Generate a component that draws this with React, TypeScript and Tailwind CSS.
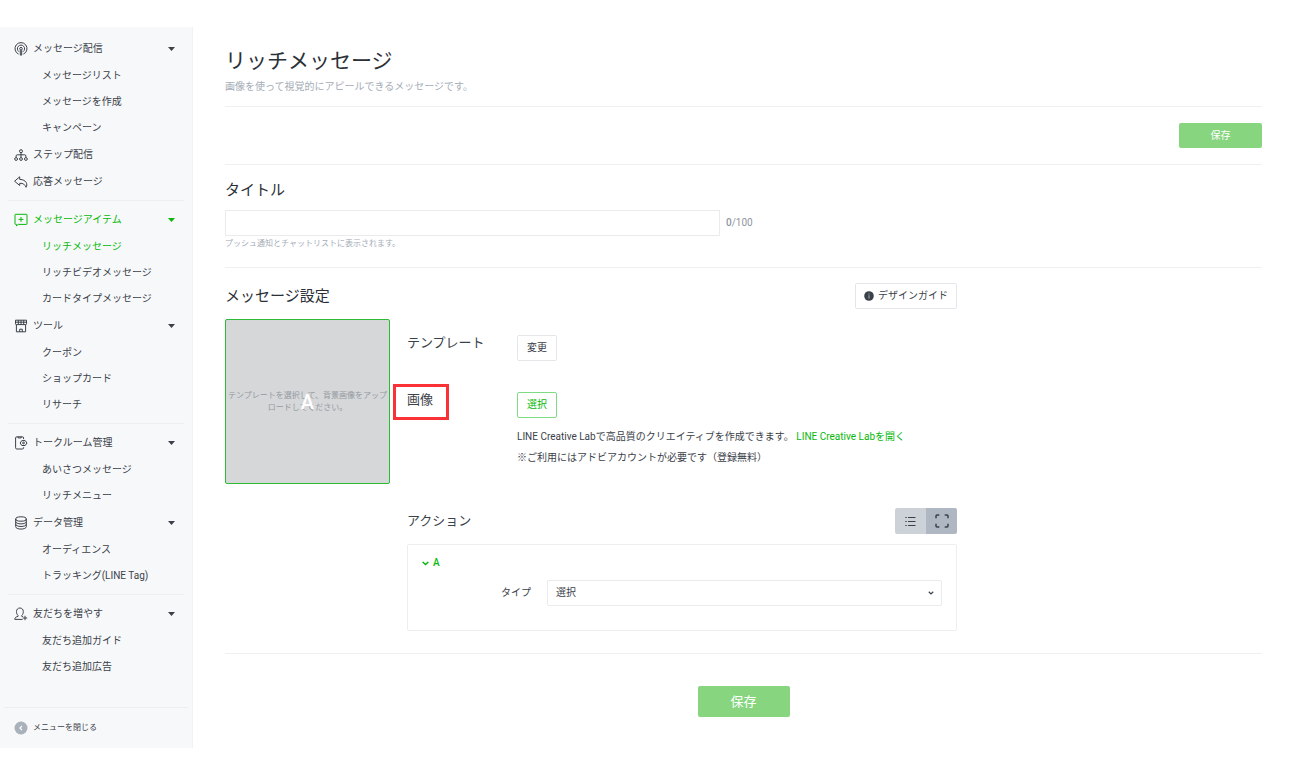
import React, { useState } from "react";

type IconName = "broadcast" | "step" | "reply" | "item" | "shop" | "room" | "data" | "friend";

interface NavItem {
  label: string;
  icon: IconName;
  children?: string[];
}

const NAV_GROUPS: NavItem[][] = [
  [
    { label: "メッセージ配信", icon: "broadcast", children: ["メッセージリスト", "メッセージを作成", "キャンペーン"] },
    { label: "ステップ配信", icon: "step" },
    { label: "応答メッセージ", icon: "reply" },
  ],
  [
    { label: "メッセージアイテム", icon: "item", children: ["リッチメッセージ", "リッチビデオメッセージ", "カードタイプメッセージ"] },
    { label: "ツール", icon: "shop", children: ["クーポン", "ショップカード", "リサーチ"] },
  ],
  [
    { label: "トークルーム管理", icon: "room", children: ["あいさつメッセージ", "リッチメニュー"] },
    { label: "データ管理", icon: "data", children: ["オーディエンス", "トラッキング(LINE Tag)"] },
  ],
  [{ label: "友だちを増やす", icon: "friend", children: ["友だち追加ガイド", "友だち追加広告"] }],
];

const ACTIVE_ITEM = "リッチメッセージ";

const ICONS: Record<IconName, React.ReactNode> = {
  broadcast: (
    <>
      <path d="M4.6 12.1a6 6 0 1 1 4.8 0" />
      <path d="M5 9.7a3.6 3.6 0 1 1 4 0" />
      <circle cx="7" cy="6.7" r="1.3" />
      <path d="M6.3 8.2v4.9h1.4V8.2" />
    </>
  ),
  step: (
    <>
      <circle cx="7" cy="3.2" r="1.5" />
      <path d="M7 4.7v4.9M2.1 9.6V8q0-1.2 1.2-1.2h7.4q1.200 0 1.200 1.200v1.600" />
      <circle cx="2.1" cy="11" r="1.4" />
      <circle cx="7" cy="11" r="1.4" />
      <circle cx="11.9" cy="11" r="1.4" />
    </>
  ),
  reply: <path d="M5.700 1.800.6 6.200l5.100 4.300V8.300c3.500-.3 5.100 1.200 6.400 4 1.700-2.600.6-7.700-6.400-7.900z" />,
  item: (
    <>
      <path d="M1.600 1.300h10.800q.6 0 .6.600v8.900q0 .6-.6.600H4.200L2.500 12.900v-1.500h-.9Q1 11.400 1 10.800V1.900q0-.6.600-.6z" />
      <path d="M7 4v4.800M4.600 6.400h4.800" />
    </>
  ),
  shop: (
    <>
      <path d="M1.500 1.200h11v3.600q0 .8-.9.800H2.400q-.9 0-.9-.8zM1.500 3.200h11M4.300 1.200v4.400M7 1.200v4.400M9.700 1.200v4.400" />
      <path d="M2.400 5.600v7.200h9.200V5.600M5.700 12.800V10.200h2.600v2.600" />
    </>
  ),
  room: (
    <>
      <path d="M9.600 3.100V2q0-1.200-1.200-1.200H2.800Q1.600.8 1.600 2v9.800q0 1.200 1.200 1.200h5.600q1.200 0 1.200-1.200v-.7M4 .9v1h3.200v-1" />
      <path d="M7.800 4.600h3.400L13 7l-1.800 2.500H7.800L6.100 7z" />
      <circle cx="9.500" cy="7" r=".9" />
    </>
  ),
  data: (
    <>
      <ellipse cx="7" cy="3" rx="5.300" ry="2.200" />
      <path d="M1.700 3v7.800C1.700 12 4 13.100 7 13.100s5.300-1.100 5.300-2.300V3M1.700 5.700c0 1.200 2.300 2.200 5.300 2.200s5.300-1 5.300-2.200M1.700 8.300c0 1.200 2.300 2.200 5.300 2.200s5.300-1 5.300-2.200" />
    </>
  ),
  friend: (
    <>
      <path d="M8.600 12.400H.8c0-2 1.300-2.500 3.200-3v-1C2.900 7.400 2.500 6.300 2.500 4.600 2.500 2.500 3.800 1 5.900 1s3.400 1.500 3.400 3.600c0 1.700-.4 2.800-1.500 3.800v1l1.300.4" />
      <path d="M11 8.800v4.400M8.800 11h4.400" />
    </>
  ),
};

function NavIcon({ name }: { name: IconName }) {
  return (
    <svg viewBox="0 0 14 14" fill="none" stroke="currentColor" strokeWidth="1" strokeLinejoin="round" className="size-3.5 shrink-0" aria-hidden="true">
      {ICONS[name]}
    </svg>
  );
}

function NavSection({ item }: { item: NavItem }) {
  const [open, setOpen] = useState(true);
  const active = item.children?.includes(ACTIVE_ITEM);

  if (!item.children) {
    return (
      <a href="#" className="flex h-[27px] items-center gap-[5px] pl-3.5">
        <NavIcon name={item.icon} />
        {item.label}
      </a>
    );
  }

  return (
    <div>
      <button
        onClick={() => setOpen(!open)}
        aria-expanded={open}
        className={`flex h-7 w-full items-center gap-[5px] pl-3.5 pr-[17px] ${active ? "text-[#06b80b]" : ""}`}
      >
        <NavIcon name={item.icon} />
        <span className="flex-1 text-left">{item.label}</span>
        <svg viewBox="0 0 7 4" className="h-1 w-[7px]" fill="currentColor" aria-hidden="true">
          <path d="M0 0h7L3.500 4z" />
        </svg>
      </button>
      {open && (
        <ul>
          {item.children.map((child) => (
            <li key={child}>
              <a href="#" className={`flex h-[26px] items-center pl-[42px] ${child === ACTIVE_ITEM ? "text-[#06b80b]" : ""}`}>
                {child}
              </a>
            </li>
          ))}
        </ul>
      )}
    </div>
  );
}

function Sidebar() {
  return (
    <aside className="flex w-[193px] shrink-0 flex-col border-r border-[#f1f2f4] bg-[#f7f8fa] pt-2">
      <nav className="grow">
        {NAV_GROUPS.map((group, i) => (
          <div key={i}>
            {i > 0 && <hr className="mx-2 mt-[5px] mb-[5px] border-[#eceef0]" />}
            {group.map((item) => (
              <NavSection key={item.label} item={item} />
            ))}
          </div>
        ))}
      </nav>
      <button className="mx-1 flex h-[41px] items-center gap-[5px] border-t border-[#eceef0] pl-2.5 text-[8px]">
        <svg viewBox="0 0 14 14" className="size-3.5" fill="none" aria-hidden="true">
          <circle cx="7" cy="7" r="6.500" fill="#a9b1bb" />
          <path d="M7.900 5 5.900 7l2 2" stroke="#fff" strokeWidth="1.100" />
        </svg>
        メニューを閉じる
      </button>
    </aside>
  );
}

export default function App() {
  const [title, setTitle] = useState("");
  const [view, setView] = useState<"list" | "area">("area");
  const [open, setOpen] = useState(true);

  return (
    <div className="flex min-h-screen bg-white pt-[27px] pb-5 font-['Roboto','Noto_Sans_CJK_JP',sans-serif] text-[10px] leading-4 text-[#3b4149]">
      <Sidebar />

      <main className="min-w-0 grow px-8">
        <header className="h-20 border-b border-[#eff0f2] pt-5">
          <h1 className="text-[21px] leading-7 text-[#2b3037]">リッチメッセージ</h1>
          <p className="mt-1 text-[#a5adb7]">画像を使って視覚的にアピールできるメッセージです。</p>
        </header>

        <div className="flex justify-end border-b border-[#eff0f2] py-4">
          <button className="h-[25px] w-[83px] rounded-xs bg-[#87d57f] text-white">保存</button>
        </div>

        <section className="border-b border-[#eff0f2] py-[15px]">
          <h2 className="text-[15px] leading-5 text-[#2b3037]">
            <label htmlFor="title">タイトル</label>
          </h2>
          <div className="mt-2.5 flex items-center gap-1.5">
            <input
              id="title"
              value={title}
              maxLength={100}
              onChange={(e) => setTitle(e.target.value)}
              className="h-[26px] w-[495px] border border-[#e9ebed] px-2 focus:outline-none"
            />
            <span className="text-[#8e96a0]">
              <b className="font-medium">{title.length}</b>/100
            </span>
          </div>
          <p className="text-[8px] text-[#a5adb7]">プッシュ通知とチャットリストに表示されます。</p>
        </section>

        <section className="border-b border-[#eff0f2] pt-[15px] pb-[22px]">
          <div className="max-w-[732px]">
            <div className="flex h-[26px] items-center justify-between">
              <h2 className="text-[15px] leading-5 text-[#2b3037]">メッセージ設定</h2>
              <button className="flex h-[26px] items-center gap-1 rounded-xs border border-[#e4e6ea] px-2">
                <svg viewBox="0 0 10 10" className="size-2.5" aria-hidden="true">
                  <circle cx="5" cy="5" r="4.800" fill="#3b4149" />
                  <path d="M5 4.300v3.200M5 2.400v1.100" stroke="#a9b1bb" strokeWidth="1" />
                </svg>
                デザインガイド
              </button>
            </div>

            <div className="mt-2.5 flex gap-[17px]">
              <div className="relative flex size-[165px] shrink-0 items-center justify-center rounded-xs border border-[#2dbb35] bg-[#d6d7d9]">
                <p className="text-center text-[8px] leading-3 text-[#949aa2]">
                  テンプレートを選択して、背景画像をアップロードしてください。
                </p>
                <span className="absolute inset-0 flex items-center justify-center text-[20px] font-medium text-white">A</span>
              </div>

              <div className="grow">
                <div className="mt-4 flex h-[57px] items-start">
                  <h3 className="w-[110px] text-[13px] leading-4">テンプレート</h3>
                  <button className="h-[26px] w-10 rounded-xs border border-[#e4e6ea]">変更</button>
                </div>
                <div className="flex items-start">
                  <h3 className="relative w-[110px] text-[13px] leading-4">
                    画像
                    <span className="absolute -top-2 -left-3.5 h-9 w-14 border-[3px] border-[#fa3236]" />
                  </h3>
                  <div>
                    <button className="h-[26px] w-10 rounded-xs border border-[#7fdb83] text-[#06b80b]">選択</button>
                    <p className="mt-2 leading-[21px]">
                      LINE Creative Labで高品質のクリエイティブを作成できます。{" "}
                      <a href="#" className="text-[#06b80b]">LINE Creative Labを開く</a>
                      <br />
                      ※ご利用にはアドビアカウントが必要です（登録無料）
                    </p>
                  </div>
                </div>

                <div className="mt-10 flex h-[26px] items-center justify-between">
                  <h3 className="text-[13px] leading-4">アクション</h3>
                  <div className="flex overflow-hidden rounded-xs">
                    <button
                      aria-label="リスト表示"
                      onClick={() => setView("list")}
                      className={`flex h-[26px] w-[31px] items-center justify-center ${view === "list" ? "bg-[#afb7c2]" : "bg-[#cdd2d8]"}`}
                    >
                      <svg viewBox="0 0 11 11" className="size-[11px]" stroke="currentColor" strokeWidth="1.100" aria-hidden="true">
                        <path d="M0.300 1.500h1.400M3 1.500h7.500M0.300 5.500h1.400M3 5.500h7.500M0.300 9.500h1.400M3 9.500h7.500" />
                      </svg>
                    </button>
                    <button
                      aria-label="エリア表示"
                      onClick={() => setView("area")}
                      className={`flex h-[26px] w-[31px] items-center justify-center ${view === "area" ? "bg-[#afb7c2]" : "bg-[#cdd2d8]"}`}
                    >
                      <svg viewBox="0 0 14 14" className="size-3.5" fill="none" stroke="currentColor" strokeWidth="1.500" aria-hidden="true">
                        <path d="M1 4.300V2q0-1 1-1h2.300M9.700 1H12q1 0 1 1v2.300M13 9.700V12q0 1-1 1H9.700M4.300 13H2q-1 0-1-1V9.700" />
                      </svg>
                    </button>
                  </div>
                </div>

                <div className="mt-2.5 rounded-xs border border-[#eceef0] px-3.5 pt-2.5 pb-6">
                  <button onClick={() => setOpen(!open)} aria-expanded={open} className="flex items-center gap-1 font-medium text-[#06b80b]">
                    <svg viewBox="0 0 7 5" className="h-[5px] w-[7px]" fill="none" stroke="currentColor" strokeWidth="1.600" aria-hidden="true">
                      <path d="M.7 1l2.800 2.500L6.300 1" />
                    </svg>
                    A
                  </button>
                  {open && (
                    <div className="mt-[9px] flex items-center">
                      <label htmlFor="type" className="w-[109px] text-right">タイプ</label>
                      <div className="relative ml-4 grow">
                        <select id="type" className="block h-[26px] w-full appearance-none rounded-xs border border-[#e9ebed] bg-white px-2">
                          <option>選択</option>
                        </select>
                        <svg viewBox="0 0 6 4" className="pointer-events-none absolute top-[11px] right-2 h-1 w-1.5" fill="none" stroke="currentColor" strokeWidth="1.200" aria-hidden="true">
                          <path d="M.8.8 3 2.900 5.200.8" />
                        </svg>
                      </div>
                    </div>
                  )}
                </div>
              </div>
            </div>
          </div>
        </section>

        <div className="flex justify-center pt-8 pb-[30px]">
          <button className="h-[31px] w-[92px] rounded-xs bg-[#87d57f] text-[13px] text-white">保存</button>
        </div>
      </main>
    </div>
  );
}
